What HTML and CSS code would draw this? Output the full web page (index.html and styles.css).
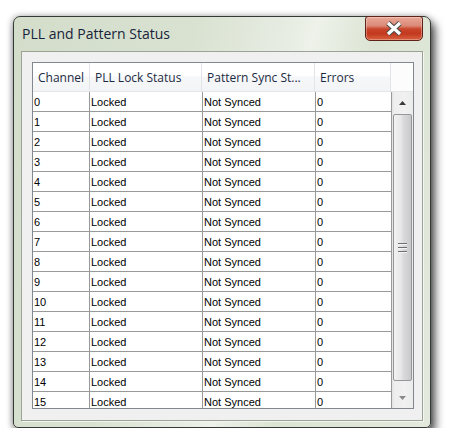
FILE: index.html
```html
<!DOCTYPE html>
<html>
<head>
<meta charset="utf-8">
<link rel="stylesheet" href="styles.css">
</head>
<body>
<div class="desk">
  <div class="window">
    <div class="titlebar">
      <span class="title">PLL and Pattern Status</span>
      <div class="close">
        <svg width="18" height="15" viewBox="0 0 18 15">
          <path d="M3 2 L15 13 M15 2 L3 13" stroke="#4a4a4a" stroke-width="5.2" fill="none"/>
          <path d="M3 2 L15 13 M15 2 L3 13" stroke="#ffffff" stroke-width="3.2" fill="none"/>
        </svg>
      </div>
    </div>
    <div class="panel">
      <div class="list">
        <div class="header">
          <div class="hcell h1">Channel</div>
          <div class="hcell h2">PLL Lock Status</div>
          <div class="hcell h3">Pattern Sync St...</div>
          <div class="hcell h4">Errors</div>
          <div class="hfill"></div>
        </div>
        <div class="body">
          <div class="rows">
            <div class="row"><div class="cell c1">0</div><div class="cell c2">Locked</div><div class="cell c3">Not Synced</div><div class="cell c4">0</div></div>
            <div class="row"><div class="cell c1">1</div><div class="cell c2">Locked</div><div class="cell c3">Not Synced</div><div class="cell c4">0</div></div>
            <div class="row"><div class="cell c1">2</div><div class="cell c2">Locked</div><div class="cell c3">Not Synced</div><div class="cell c4">0</div></div>
            <div class="row"><div class="cell c1">3</div><div class="cell c2">Locked</div><div class="cell c3">Not Synced</div><div class="cell c4">0</div></div>
            <div class="row"><div class="cell c1">4</div><div class="cell c2">Locked</div><div class="cell c3">Not Synced</div><div class="cell c4">0</div></div>
            <div class="row"><div class="cell c1">5</div><div class="cell c2">Locked</div><div class="cell c3">Not Synced</div><div class="cell c4">0</div></div>
            <div class="row"><div class="cell c1">6</div><div class="cell c2">Locked</div><div class="cell c3">Not Synced</div><div class="cell c4">0</div></div>
            <div class="row"><div class="cell c1">7</div><div class="cell c2">Locked</div><div class="cell c3">Not Synced</div><div class="cell c4">0</div></div>
            <div class="row"><div class="cell c1">8</div><div class="cell c2">Locked</div><div class="cell c3">Not Synced</div><div class="cell c4">0</div></div>
            <div class="row"><div class="cell c1">9</div><div class="cell c2">Locked</div><div class="cell c3">Not Synced</div><div class="cell c4">0</div></div>
            <div class="row"><div class="cell c1">10</div><div class="cell c2">Locked</div><div class="cell c3">Not Synced</div><div class="cell c4">0</div></div>
            <div class="row"><div class="cell c1">11</div><div class="cell c2">Locked</div><div class="cell c3">Not Synced</div><div class="cell c4">0</div></div>
            <div class="row"><div class="cell c1">12</div><div class="cell c2">Locked</div><div class="cell c3">Not Synced</div><div class="cell c4">0</div></div>
            <div class="row"><div class="cell c1">13</div><div class="cell c2">Locked</div><div class="cell c3">Not Synced</div><div class="cell c4">0</div></div>
            <div class="row"><div class="cell c1">14</div><div class="cell c2">Locked</div><div class="cell c3">Not Synced</div><div class="cell c4">0</div></div>
            <div class="row"><div class="cell c1">15</div><div class="cell c2">Locked</div><div class="cell c3">Not Synced</div><div class="cell c4">0</div></div>
          </div>
          <div class="scrollbar">
            <div class="sb-btn">
              <svg width="7" height="4" viewBox="0 0 7 4"><path d="M3.5 0 L7 4 L0 4 Z" fill="#3a3a3a"/></svg>
            </div>
            <div class="thumb">
              <svg width="9" height="10" viewBox="0 0 9 10">
                <rect x="0" y="0" width="9" height="1" fill="#6e6e6e"/>
                <rect x="0" y="1" width="9" height="1" fill="#f4f4f4"/>
                <rect x="0" y="4" width="9" height="1" fill="#6e6e6e"/>
                <rect x="0" y="5" width="9" height="1" fill="#f4f4f4"/>
                <rect x="0" y="8" width="9" height="1" fill="#6e6e6e"/>
                <rect x="0" y="9" width="9" height="1" fill="#f4f4f4"/>
              </svg>
            </div>
            <div class="sb-gap"></div>
            <div class="sb-btn">
              <svg width="7" height="4" viewBox="0 0 7 4"><path d="M0 0 L7 0 L3.5 4 Z" fill="#8a8a8a"/></svg>
            </div>
          </div>
        </div>
      </div>
    </div>
  </div>
</div>
</body>
</html>
```
FILE: styles.css
```css
html, body {
  margin: 0;
  background: #ffffff;
}

.desk {
  padding: 16px 0 0 13px;
}

.window {
  width: 418px;
  height: 412px;
  box-sizing: border-box;
  border: 1px solid #353a36;
  border-radius: 7px 7px 5px 5px;
  background: linear-gradient(105deg, #d3ddca 0%, #d9e2d1 35%, #e6ece2 52%, #eef2ea 58%, #dbe4d3 70%, #e3e9dd 100%);
  box-shadow: 4px 6px 10px rgba(0, 0, 0, 0.7), -1px 0 6px rgba(0, 0, 0, 0.3);
  display: flex;
  flex-direction: column;
}

.titlebar {
  height: 34px;
  display: flex;
  align-items: flex-start;
  flex-shrink: 0;
}

.title {
  font-family: "Open Sans", "Noto Sans", sans-serif;
  font-size: 14px;
  line-height: 20px;
  color: #17233a;
  padding: 7px 0 0 8px;
  white-space: nowrap;
}

.close {
  margin: -1px 7px 0 auto;
  width: 58px;
  height: 25px;
  box-sizing: border-box;
  border: 1px solid #5e2218;
  border-radius: 3px 3px 5px 5px;
  background: linear-gradient(#e9a797 0%, #dc8a77 38%, #c9452b 52%, #c2391f 72%, #d9603f 100%);
  box-shadow: inset 0 0 0 1px rgba(255, 255, 255, 0.3);
  display: flex;
  align-items: center;
  justify-content: center;
}

.panel {
  flex: 1;
  margin: 0 7px 6px 7px;
  border: 1px solid #9aa395;
  background: #f0f0f0;
  padding: 10px 8px 11px 10px;
  box-shadow: 1px 1px 0 #f3f6f0;
}

.list {
  width: 382px;
  height: 347px;
  box-sizing: border-box;
  border: 1px solid #828790;
  background: #ffffff;
  display: flex;
  flex-direction: column;
  overflow: hidden;
}

.header {
  height: 29px;
  flex-shrink: 0;
  box-sizing: border-box;
  display: flex;
  border-bottom: 1px solid #e5e5e5;
  background: linear-gradient(#ffffff 0%, #ffffff 45%, #f6f7f9 50%, #f3f4f6 100%);
}

.hcell {
  box-sizing: border-box;
  border-right: 1px solid #e1e4e8;
  padding: 1px 0 0 5px;
  font-family: "Open Sans", "Noto Sans", sans-serif;
  font-size: 12px;
  line-height: 27px;
  color: #1b2a42;
  white-space: nowrap;
  overflow: hidden;
}

.h1 { width: 57px; }
.h2 { width: 112px; }
.h3 { width: 113px; }
.h4 { width: 76px; }

.hfill {
  flex: 1;
  background: #fcfcfc;
}

.body {
  flex: 1;
  display: flex;
  min-height: 0;
}

.rows {
  width: 359px;
  overflow: hidden;
}

.row {
  display: flex;
  height: 20px;
}

.cell {
  box-sizing: border-box;
  height: 20px;
  border-right: 1px solid #999999;
  border-bottom: 1px solid #999999;
  padding: 2px 0 0 1px;
  font-family: "Liberation Sans", Arial, sans-serif;
  font-size: 11px;
  line-height: 16px;
  color: #000000;
  white-space: nowrap;
  overflow: hidden;
}

.c1 { width: 57px; }
.c2 { width: 113px; }
.c3 { width: 113px; }
.c4 { width: 76px; }

.scrollbar {
  width: 21px;
  display: flex;
  flex-direction: column;
  background: linear-gradient(to right, #e3e3e3 0%, #eeeeee 12%, #f1f1f1 60%, #ebebeb 100%);
}

.sb-btn {
  height: 21px;
  flex-shrink: 0;
  display: flex;
  align-items: center;
  justify-content: center;
}

.thumb {
  margin: 1px 1px 0 1px;
  height: 267px;
  flex-shrink: 0;
  box-sizing: border-box;
  border: 1px solid #979797;
  border-radius: 2px;
  background: linear-gradient(to right, #f2f2f2 0%, #e7e7e8 40%, #dadadc 55%, #c9c9cb 100%);
  display: flex;
  align-items: center;
  justify-content: center;
}

.sb-gap {
  flex: 1;
}
```
